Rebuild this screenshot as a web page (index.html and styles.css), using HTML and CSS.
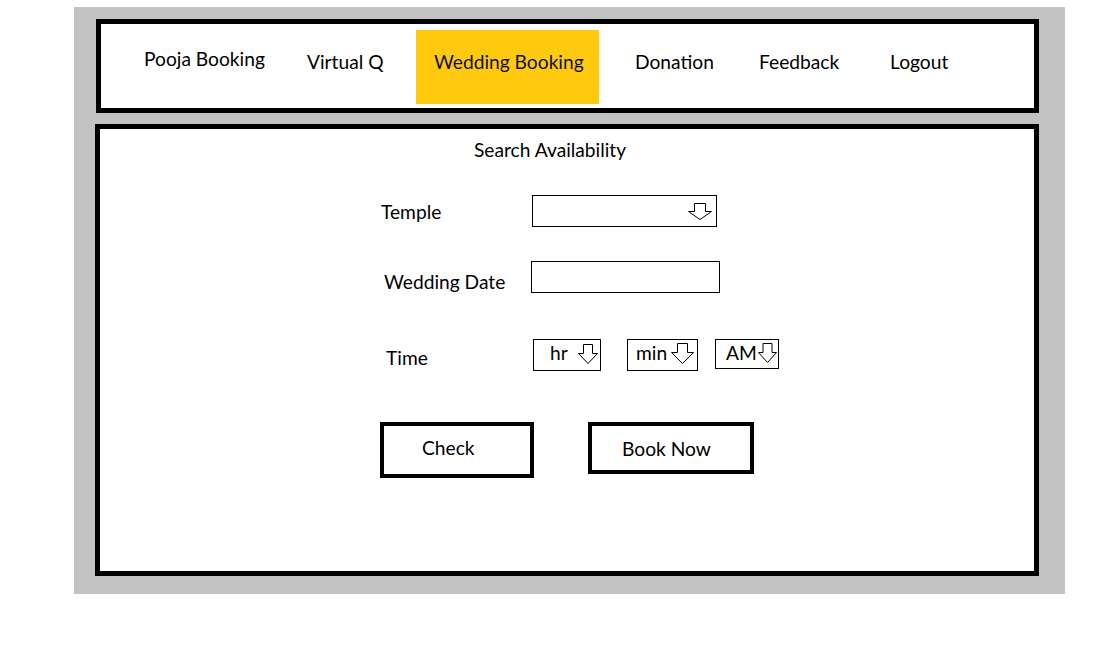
FILE: index.html
```html
<!DOCTYPE html>
<html>
<head>
<meta charset="utf-8">
<link rel="stylesheet" href="styles.css">
</head>
<body>
<div class="frame">
  <nav class="nav">
    <span class="nav-item nav-pooja">Pooja Booking</span>
    <span class="nav-item nav-virtual">Virtual Q</span>
    <span class="nav-item nav-wedding">Wedding Booking</span>
    <span class="nav-item nav-donation">Donation</span>
    <span class="nav-item nav-feedback">Feedback</span>
    <span class="nav-item nav-logout">Logout</span>
  </nav>
  <main class="panel">
    <div class="title">Search Availability</div>
    <div class="form">
      <div class="row row-temple">
        <span class="label label-temple">Temple</span>
        <div class="select select-temple">
          <svg class="arrow-lg" width="24" height="17" viewBox="0 0 24 17"><polygon points="6.5,0.5 17.5,0.5 17.5,8.5 23.5,8.5 12,16.5 0.5,8.5 6.5,8.5" fill="#fff" stroke="#000" stroke-width="1"/></svg>
        </div>
      </div>
      <div class="row row-date">
        <span class="label label-date">Wedding Date</span>
        <div class="input-date"></div>
      </div>
      <div class="row row-time">
        <span class="label label-time">Time</span>
        <div class="tbox tbox-hr"><span class="ttext">hr</span>
          <svg class="arrow-sm" width="20" height="20" viewBox="0 0 20 20"><polygon points="5.5,0.5 14.5,0.5 14.5,9.5 19.5,9.5 10,19.5 0.5,9.5 5.5,9.5" fill="#fff" stroke="#000" stroke-width="1"/></svg>
        </div>
        <div class="tbox tbox-min"><span class="ttext">min</span>
          <svg class="arrow-sm" width="23" height="21" viewBox="0 0 23 21"><polygon points="6.5,0.5 16.5,0.5 16.5,9.5 22.5,9.5 11.5,20.5 0.5,9.5 6.5,9.5" fill="#fff" stroke="#000" stroke-width="1"/></svg>
        </div>
        <div class="tbox tbox-am"><span class="ttext">AM</span>
          <svg class="arrow-sm" width="19" height="20" viewBox="0 0 19 20"><polygon points="5,0.5 14,0.5 14,9.5 18.5,9.5 9.5,19.5 0.5,9.5 5,9.5" fill="#fff" stroke="#000" stroke-width="1"/></svg>
        </div>
      </div>
      <div class="row row-buttons">
        <div class="btn btn-check">Check</div>
        <div class="btn btn-book">Book Now</div>
      </div>
    </div>
  </main>
</div>
</body>
</html>
```
FILE: styles.css
```css
* { box-sizing: border-box; }
body {
  margin: 0;
  background: #fff;
  font-family: Lato, "Open Sans", sans-serif;
  font-size: 19.2px;
  color: #000;
}
.frame {
  margin: 7px 0 0 74px;
  width: 991px;
  height: 587px;
  background: #c3c3c3;
  padding: 12px 26px 18px 21px;
}
.nav {
  height: 94px;
  margin-left: 1px;
  border: 5px solid #000;
  background: #fff;
  display: flex;
  align-items: flex-start;
}
.nav-item {
  line-height: 24px;
  padding-top: 26px;
  white-space: nowrap;
}
.nav-pooja { margin-left: 43px; width: 163px; padding-top: 23px; }
.nav-virtual { width: 109px; }
.nav-wedding {
  width: 183px;
  height: 74px;
  margin-top: 6px;
  padding: 20px 0 0 18px;
  background: #ffc90e;
  color: #10103a;
  margin-right: 36px;
}
.nav-donation { width: 124px; }
.nav-feedback { width: 131px; }
.panel {
  margin-top: 11px;
  height: 452px;
  border: 5px solid #000;
  background: #fff;
  padding-top: 9px;
}
.title {
  margin-left: 374px;
  line-height: 24px;
}
.form {
  margin-left: 281px;
}
.row {
  display: flex;
  align-items: flex-start;
  height: 32px;
}
.label { line-height: 24px; white-space: nowrap; }
.row-temple { margin-top: 33px; }
.label-temple { width: 151px; padding-top: 5px; }
.select-temple {
  width: 185px;
  height: 32px;
  border: 1px solid #000;
  display: flex;
  align-items: flex-start;
  justify-content: flex-end;
  padding: 7px 4px 0 0;
}
.row-date { margin-top: 34px; }
.label-date { width: 150px; padding: 9px 0 0 3px; }
.input-date {
  width: 189px;
  height: 32px;
  border: 1px solid #000;
}
.row-time { margin-top: 46px; }
.label-time { width: 152px; padding: 7px 0 0 5px; }
.tbox {
  height: 32px;
  border: 1px solid #000;
  display: flex;
  align-items: flex-start;
}
.ttext { line-height: 24px; margin-top: 1px; }
.arrow-sm { margin-left: auto; margin-top: 4px; }
.tbox-hr { width: 68px; padding: 0 2px 0 16px; }
.tbox-min { width: 71px; margin-left: 26px; padding: 0 3px 0 8px; }
.tbox-min .arrow-sm { margin-top: 3px; }
.tbox-am { width: 64px; height: 30px; margin-left: 17px; padding: 0 1px 0 10px; }
.tbox-am .arrow-sm { margin-top: 3px; margin-left: 1px; }
.row-buttons { margin-top: 51px; height: 56px; }
.btn {
  border: 4px solid #000;
  line-height: 24px;
  display: flex;
  align-items: center;
}
.btn-check { width: 154px; height: 56px; margin-left: -1px; padding: 0 0 4px 38px; }
.btn-book { width: 166px; height: 52px; margin-left: 54px; padding: 2px 0 0 30px; }
```
